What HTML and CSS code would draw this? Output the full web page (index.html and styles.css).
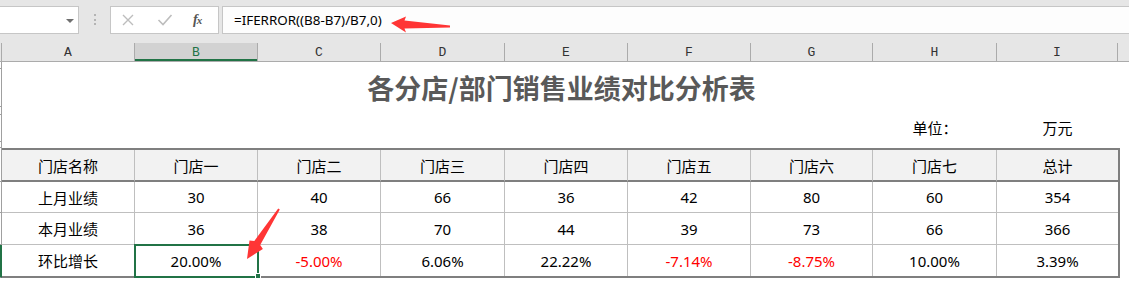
FILE: index.html
```html
<!DOCTYPE html>
<html lang="zh-CN">
<head>
<meta charset="utf-8">
<title>各分店/部门销售业绩对比分析表</title>
<link rel="stylesheet" href="styles.css">
</head>
<body>
<div class="app">
  <div class="fbar">
    <div class="namebox"><span class="dd"></span></div>
    <div class="grip"><i></i><i></i><i></i></div>
    <div class="fxbox">
      <svg class="ic" width="14" height="14" viewBox="0 0 14 14"><path d="M2 2 L12 12 M12 2 L2 12" stroke="#bdbdbd" stroke-width="1.4" fill="none"/></svg>
      <svg class="ic" width="16" height="14" viewBox="0 0 16 14"><path d="M1.5 7 L6 11.5 L14.5 2" stroke="#bdbdbd" stroke-width="1.6" fill="none"/></svg>
      <span class="fx">f<span class="fxx">x</span></span>
    </div>
    <div class="formula">=IFERROR((B8-B7)/B7,0)</div>
  </div>

  <div class="colhdr">
    <div class="corner"></div>
    <div class="ch">A</div>
    <div class="ch on">B</div>
    <div class="ch">C</div>
    <div class="ch">D</div>
    <div class="ch">E</div>
    <div class="ch">F</div>
    <div class="ch">G</div>
    <div class="ch">H</div>
    <div class="ch">I</div>
    <div class="ch last"></div>
  </div>

  <div class="body">
    <div class="rowhdr">
      <div class="rh h7"></div>
      <div class="rh h38"></div>
      <div class="rh h8"></div>
      <div class="rh h27"></div>
      <div class="rh h6"></div>
      <div class="rh h34"></div>
      <div class="rh h31"></div>
      <div class="rh h32"></div>
      <div class="rh h33 act"></div>
      <div class="rh rest"></div>
    </div>

    <div class="sheet">
      <div class="title">各分店/部门销售业绩对比分析表</div>
      <div class="unit">
        <div class="u-label">单位：</div>
        <div class="u-val">万元</div>
      </div>

      <div class="tbl">
        <div class="c hd">门店名称</div>
        <div class="c hd">门店一</div>
        <div class="c hd">门店二</div>
        <div class="c hd">门店三</div>
        <div class="c hd">门店四</div>
        <div class="c hd">门店五</div>
        <div class="c hd">门店六</div>
        <div class="c hd">门店七</div>
        <div class="c hd">总计</div>

        <div class="c">上月业绩</div>
        <div class="c">30</div>
        <div class="c">40</div>
        <div class="c">66</div>
        <div class="c">36</div>
        <div class="c">42</div>
        <div class="c">80</div>
        <div class="c">60</div>
        <div class="c">354</div>

        <div class="c">本月业绩</div>
        <div class="c">36</div>
        <div class="c">38</div>
        <div class="c">70</div>
        <div class="c">44</div>
        <div class="c">39</div>
        <div class="c">73</div>
        <div class="c">66</div>
        <div class="c">366</div>

        <div class="c lastrow">环比增长</div>
        <div class="c lastrow sel">20.00%<span class="handle"></span></div>
        <div class="c lastrow neg">-5.00%</div>
        <div class="c lastrow">6.06%</div>
        <div class="c lastrow">22.22%</div>
        <div class="c lastrow neg">-7.14%</div>
        <div class="c lastrow neg">-8.75%</div>
        <div class="c lastrow">10.00%</div>
        <div class="c lastrow">3.39%</div>
      </div>
    </div>
  </div>

  <svg class="arrows" width="1129" height="285" viewBox="0 0 1129 285">
    <polygon points="391,23 406,16.5 404.5,20.5 450,25.6 450,27.4 404.5,28.5 406,32.5" fill="#ff3535"/>
    <polygon points="247,259 262.9,249 260.2,244.9 279.8,209.6 278.2,208.4 254.3,241.1 249.5,240.4" fill="#ff3535"/>
  </svg>
</div>
</body>
</html>
```

FILE: styles.css
```css
* { box-sizing: border-box; }
html, body { margin: 0; padding: 0; background: #ffffff; }
body { width: 1129px; height: 285px; overflow: hidden; }

.app {
  position: relative;
  width: 1129px;
  height: 285px;
  font-family: "Noto Sans", "Noto Sans CJK SC", sans-serif;
  color: #000;
}

/* formula bar */
.fbar {
  height: 43px;
  background: #e6e6e6;
  display: flex;
  align-items: flex-start;
  padding-top: 6px;
}
.namebox {
  width: 79px;
  height: 28px;
  background: #ffffff;
  border: 1px solid #c6c6c6;
  border-left: none;
  position: relative;
}
.dd {
  position: absolute;
  left: 66px;
  top: 12px;
  width: 0;
  height: 0;
  border-left: 4px solid transparent;
  border-right: 4px solid transparent;
  border-top: 4px solid #6f6f6f;
}
.grip {
  width: 3px;
  margin-left: 15px;
  padding-top: 8px;
  display: flex;
  flex-direction: column;
  gap: 2.5px;
}
.grip i { display: block; width: 2px; height: 2px; background: #b4b4b4; }
.fxbox {
  margin-left: 13px;
  width: 109px;
  height: 28px;
  background: #ffffff;
  border: 1px solid #c6c6c6;
  display: flex;
  align-items: center;
  padding-left: 10px;
}
.fxbox .ic { display: block; }
.fxbox .ic:nth-child(2) { margin-left: 22px; }
.fx {
  margin-left: 20px;
  font-family: "Liberation Serif", "DejaVu Serif", serif;
  font-style: italic;
  font-weight: bold;
  font-size: 14px;
  color: #555;
  letter-spacing: -1px;
}
.fxx { font-size: 11px; }
.formula {
  margin-left: 3px;
  flex: 1;
  height: 28px;
  background: #fdfdfd;
  border: 1px solid #c6c6c6;
  border-right: none;
  padding-left: 11px;
  font-size: 13.4px;
  line-height: 26px;
  color: #000;
}

/* column header */
.colhdr {
  height: 19px;
  display: flex;
  background: #e6e6e6;
  border-bottom: 1px solid #ababab;
}
.corner { width: 2px; border-right: 1px solid #ababab; }
.ch {
  border-right: 1px solid #ababab;
  font-family: "Liberation Mono", "DejaVu Sans Mono", monospace;
  font-size: 13px;
  color: #333;
  text-align: center;
  line-height: 20px;
}
.ch:nth-child(2) { width: 133px; }
.ch:nth-child(3) { width: 123px; }
.ch:nth-child(4) { width: 123px; }
.ch:nth-child(5) { width: 124px; }
.ch:nth-child(6) { width: 123px; }
.ch:nth-child(7) { width: 123px; }
.ch:nth-child(8) { width: 122px; }
.ch:nth-child(9) { width: 124px; }
.ch:nth-child(10) { width: 121px; }
.ch.last { flex: 1; border-right: none; }
.ch.on {
  background: #d2d2d2;
  color: #217346;
  box-shadow: inset 0 -2px 0 #217346;
}

/* body */
.body { display: flex; }
.rowhdr {
  width: 2px;
  display: flex;
  flex-direction: column;
}
.rh { border-right: 1px solid #a0a0a0; border-bottom: 1px solid #a0a0a0; }
.h7 { height: 7px; }
.h38 { height: 38px; }
.h8 { height: 8px; }
.h27 { height: 27px; }
.h6 { height: 6px; }
.h34 { height: 34px; }
.h31 { height: 31px; }
.h32 { height: 32px; }
.h33 { height: 33px; }
.rh.act { background: #217346; border-right-color: #217346; border-bottom-color: #8a8a8a; }
.rh.rest { flex: 1; border-bottom: none; height: 10px; }

.sheet { width: 1119px; padding-top: 7px; }
.title {
  height: 38px;
  line-height: 38px;
  text-align: center;
  font-family: "Noto Sans CJK SC", sans-serif;
  font-weight: bold;
  font-size: 27px;
  color: #595959;
}
.unit {
  margin-top: 8px;
  height: 27px;
  display: grid;
  grid-template-columns: 871px 124px 121px;
  font-size: 15px;
  line-height: 27px;
  margin-bottom: 6px;
}
.u-label { grid-column: 2; text-align: center; }
.u-val { grid-column: 3; text-align: center; }

.tbl {
  display: grid;
  grid-template-columns: 133px 123px 123px 124px 123px 123px 122px 124px 121px;
  grid-template-rows: 32px 31px 32px 31px;
  border-top: 2px solid #7f7f7f;
  border-right: 2px solid #7f7f7f;
  border-bottom: 2px solid #7f7f7f;
  width: 1118px;
  font-size: 15px;
}
.c {
  display: flex;
  align-items: center;
  justify-content: center;
  border-right: 1px solid #bfbfbf;
  border-bottom: 1px solid #bfbfbf;
  background: #ffffff;
}
.c:nth-child(9n) { border-right: none; }
.c.hd { background: #f2f2f2; border-bottom: 2px solid #7f7f7f; }
.c.lastrow { border-bottom: none; }
.c.neg { color: #ff0000; }
.c.sel { position: relative; }
.c.sel::after {
  content: "";
  position: absolute;
  left: -1px;
  top: -1px;
  right: -2px;
  bottom: -2px;
  border: 2px solid #217346;
}
.handle {
  position: absolute;
  left: 120px;
  top: 28px;
  width: 6px;
  height: 6px;
  background: #217346;
  border: 1px solid #ffffff;
  z-index: 2;
}

.arrows {
  position: absolute;
  left: 0;
  top: 0;
  pointer-events: none;
}
```
